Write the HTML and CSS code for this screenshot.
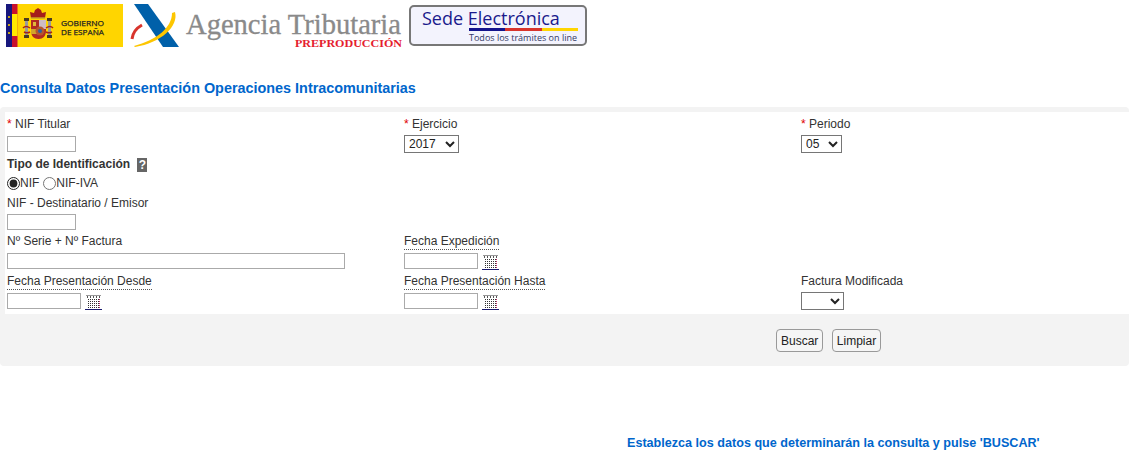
FILE: index.html
```html
<!DOCTYPE html>
<html lang="es">
<head>
  <meta charset="UTF-8" />
  <title>Consulta Datos Presentación Operaciones Intracomunitarias</title>
  <link rel="stylesheet" href="styles.css">
</head>
<body>
  <svg width="0" height="0" class="defs">
    <symbol id="cal" viewBox="0 0 17 15">
      <rect x="1" y="0" width="15" height="1" fill="#999"/>
      <path d="M2.500 1v2M5.500 1v2M8.500 1v2M11.500 1v2M14.500 1v2" stroke="#555" stroke-width="1"/>
      <path d="M3 4.500h11M3 6.500h11M3 8.500h11M3 10.500h11M3 12.500h11" stroke="#333" stroke-width="1" stroke-dasharray="1 1"/>
      <path d="M14.500 4v9" stroke="#c2306a" stroke-width="1" stroke-dasharray="1 1"/>
      <rect x="0" y="14" width="17" height="1" fill="#1a1a6e"/>
    </symbol>
  </svg>

  <header class="logos">
    <svg class="logo-gob" width="117" height="43" viewBox="0 0 117 43">
      <rect width="117" height="43" fill="#ffd500"/>
      <rect width="6" height="43" fill="#17177c"/>
      <rect x="6" width="5.500" height="43" fill="#c8102e"/>
      <rect x="6" y="10" width="5.500" height="22" fill="#ffe900"/>
      <circle cx="3" cy="13" r="1" fill="#ffd500"/><circle cx="3" cy="21" r="1" fill="#ffd500"/><circle cx="3" cy="29" r="1" fill="#ffd500"/>
      <!-- escudo -->
      <path d="M25 14l-1-6 4 1 1-3 3-2 3 2 1 3 4-1-1 6z" fill="#a51f1a"/>
      <path d="M25 14h14" stroke="#c9a227" stroke-width="1.500"/>
      <path d="M25 16h15v11c0 5-3 8-7.500 8S25 32 25 27z" fill="#b02a22"/>
      <rect x="33" y="16" width="7" height="9" fill="#cdbcc4"/>
      <rect x="25" y="25" width="8" height="5" fill="#d2a52a"/>
      <rect x="27" y="18" width="3" height="4" fill="#e0b93a"/>
      <circle cx="34" cy="27" r="4.500" fill="#b5562e"/>
      <circle cx="34" cy="27" r="2" fill="#2f5f9e"/>
      <path d="M19 16h3v16h-3zM42 16h3v16h-3z" fill="#9a9a9a"/>
      <path d="M18 14h5v3h-5zM41 14h5v3h-5zM18 31h5v3h-5zM41 31h5v3h-5z" fill="#4a3a20"/>
      <path d="M17 24c2-2 4-2 7 0M47 24c-2-2-4-2-7 0M18 28c2 1 4 1 6 0M46 28c-2 1-4 1-6 0" fill="none" stroke="#a3231c" stroke-width="1.500"/>
      <text x="55" y="22" textLength="43" lengthAdjust="spacingAndGlyphs" class="gob-text">GOBIERNO</text>
      <text x="55" y="30.500" textLength="43" lengthAdjust="spacingAndGlyphs" class="gob-text">DE ESPAÑA</text>
    </svg>

    <svg class="logo-aeat" width="272" height="43" viewBox="0 0 272 43">
      <path d="M4 0h14l31 43H33z" fill="#0060a9"/>
      <path d="M12 21Q3 26 2 35" fill="none" stroke="#d8342c" stroke-width="3"/>
      <path d="M42 9l3-1c4 14-14 31-40 35l-1-1c22-6 38-18 38-33z" fill="#fdc600"/>
      <text x="56" y="30" textLength="215" lengthAdjust="spacingAndGlyphs" class="aeat-text">Agencia Tributaria</text>
      <text x="165" y="42.500" textLength="107" lengthAdjust="spacingAndGlyphs" class="pre-text">PREPRODUCCIÓN</text>
    </svg>

    <div class="sede">
      <span class="sede-title">Sede Electrónica</span>
      <span class="sede-bar"><i class="bar-b"></i><i class="bar-r"></i><i class="bar-y"></i></span>
      <span class="sede-sub">Todos los trámites on line</span>
    </div>
  </header>

  <h1 class="titulo">Consulta Datos Presentación Operaciones Intracomunitarias</h1>

  <section class="panel">
    <form class="campos">
      <div class="campo">
        <label class="etq"><span class="req">*</span> NIF Titular</label>
        <input type="text" class="txt corto">
      </div>
      <div class="campo">
        <label class="etq"><span class="req">*</span> Ejercicio</label>
        <select class="sel sel-ej"><option>2017</option></select>
      </div>
      <div class="campo">
        <label class="etq"><span class="req">*</span> Periodo</label>
        <select class="sel sel-per"><option>05</option></select>
      </div>

      <div class="campo ancho">
        <div class="etq negrita">Tipo de Identificación <span class="ayuda">?</span></div>
        <div class="radios">
          <label class="radio"><input type="radio" name="tipo" checked>NIF</label>
          <label class="radio"><input type="radio" name="tipo">NIF-IVA</label>
        </div>
      </div>

      <div class="campo ancho fila-justa">
        <label class="etq">NIF - Destinatario / Emisor</label>
        <input type="text" class="txt corto">
      </div>

      <div class="campo">
        <label class="etq">Nº Serie + Nº Factura</label>
        <input type="text" class="txt largo">
      </div>
      <div class="campo ocupa2">
        <label class="etq"><span class="punteado">Fecha Expedición</span></label>
        <div class="fecha"><input type="text" class="txt"><svg class="cal"><use href="#cal"/></svg></div>
      </div>

      <div class="campo">
        <label class="etq"><span class="punteado">Fecha Presentación Desde</span></label>
        <div class="fecha"><input type="text" class="txt"><svg class="cal"><use href="#cal"/></svg></div>
      </div>
      <div class="campo">
        <label class="etq"><span class="punteado">Fecha Presentación Hasta</span></label>
        <div class="fecha"><input type="text" class="txt"><svg class="cal"><use href="#cal"/></svg></div>
      </div>
      <div class="campo">
        <label class="etq">Factura Modificada</label>
        <select class="sel sel-mod"><option></option></select>
      </div>
    </form>
    <div class="botones">
      <button type="button" class="btn">Buscar</button>
      <button type="button" class="btn">Limpiar</button>
    </div>
  </section>

  <p class="aviso">Establezca los datos que determinarán la consulta y pulse 'BUSCAR'</p>
</body>
</html>
```

FILE: styles.css
```css
* { box-sizing: border-box; }
body {
  margin: 0;
  font-family: "Liberation Sans", Arial, sans-serif;
  font-size: 12px;
  color: #333;
  background: #fff;
}
.defs { display: block; height: 0; }
.logos {
  display: flex;
  align-items: flex-start;
  height: 80px;
  padding: 4px 0 0 6px;
}
.logo-aeat { margin-left: 7px; }
.gob-text { font-size: 8px; fill: #222; stroke: #222; stroke-width: 0.25px; font-family: "Open Sans", sans-serif; }
.aeat-text { font-family: "Liberation Serif", serif; font-size: 28.5px; fill: #8a8a8a; stroke: #8a8a8a; stroke-width: 0.3px; }
.pre-text { font-family: "Liberation Serif", serif; font-size: 11px; font-weight: bold; fill: #e5202e; }
.sede {
  width: 178px;
  height: 41px;
  margin: 1px 0 0 7px;
  padding: 2px 0 0 11px;
  display: flex;
  flex-direction: column;
  background: #f3f3fd;
  border: 2px solid #777;
  border-radius: 5px;
  font-family: "Open Sans", sans-serif;
  color: #1a1a8c;
}
.sede-title { flex: none; font-size: 18px; line-height: 19px; white-space: nowrap; }
.sede-bar { flex: none; display: flex; width: 109px; height: 3px; margin-left: 47px; }
.sede-bar i { display: block; flex: 1; }
.bar-b { background: #14148c; }
.bar-r { background: #d8342c; }
.bar-y { background: #ffd500; }
.sede-sub { flex: none; font-size: 9px; line-height: 11px; margin: 1px 0 0 47px; white-space: nowrap; color: #333a66; }

.titulo {
  margin: 0;
  height: 27px;
  font-size: 14.4px;
  line-height: 16px;
  color: #0066cc;
}
.panel {
  height: 259px;
  background: #f3f3f3;
  padding-top: 5px;
  border-radius: 4px;
}
.campos {
  margin-left: 5px;
  height: 202px;
  background: #fff;
  padding: 4px 0 0 2px;
  display: grid;
  grid-template-columns: 397px 397px 1fr;
  align-content: start;
}
.campo { display: flex; flex-direction: column; align-items: flex-start; }
.ancho { grid-column: 1 / -1; }
.ocupa2 { grid-column: 2 / -1; }
.etq { display: block; height: 16px; line-height: 16px; margin-bottom: 4px; white-space: nowrap; }
.negrita { font-weight: bold; margin-bottom: 3px; }
.fila-justa .etq { margin-bottom: 3px; }
.fila-justa .txt { margin-bottom: 3px; }
.req { color: #e00000; }
.punteado { border-bottom: 1px dotted #555; padding-bottom: 1px; }
.txt {
  display: block;
  width: 74px;
  height: 16px;
  padding: 0;
  border: 1px solid #aaa;
  background: #fff;
  margin: 0 0 4px;
}
.corto { width: 69px; }
.largo { width: 338px; }
.sel { display: block; height: 18px; margin: -1px 0 1px; padding: 0; font: 12px "Liberation Sans", Arial, sans-serif; background: #fff; color: #222; }
.sel-ej { width: 55px; }
.sel-per { width: 41px; }
.sel-mod { width: 43px; }
.ayuda {
  display: inline-block;
  width: 10px;
  height: 14px;
  margin-left: 4px;
  background: #666;
  color: #fff;
  font-size: 12px;
  line-height: 14px;
  text-align: center;
  vertical-align: middle;
}
.radios { display: flex; height: 16px; margin-bottom: 4px; align-items: center; }
.radio { display: flex; align-items: center; margin-right: 4px; }
.radio input { margin: 0; width: 13px; height: 13px; accent-color: #222; }
.fecha { display: flex; align-items: flex-start; }
.cal { width: 17px; height: 15px; margin: 2px 0 0 4px; }
.botones { padding: 15px 0 0 776px; display: flex; gap: 9px; }
.btn {
  height: 23px;
  padding: 0 4px;
  border: 1px solid #999;
  border-radius: 4px;
  background: #f5f5f5;
  color: #222;
  font: 12px "Liberation Sans", Arial, sans-serif;
}
.btn + .btn { padding: 0 3.5px; }
.aviso {
  margin: 70px 0 0;
  padding-left: 627px;
  font-size: 12.6px;
  line-height: 14px;
  font-weight: bold;
  color: #0066cc;
}
```
